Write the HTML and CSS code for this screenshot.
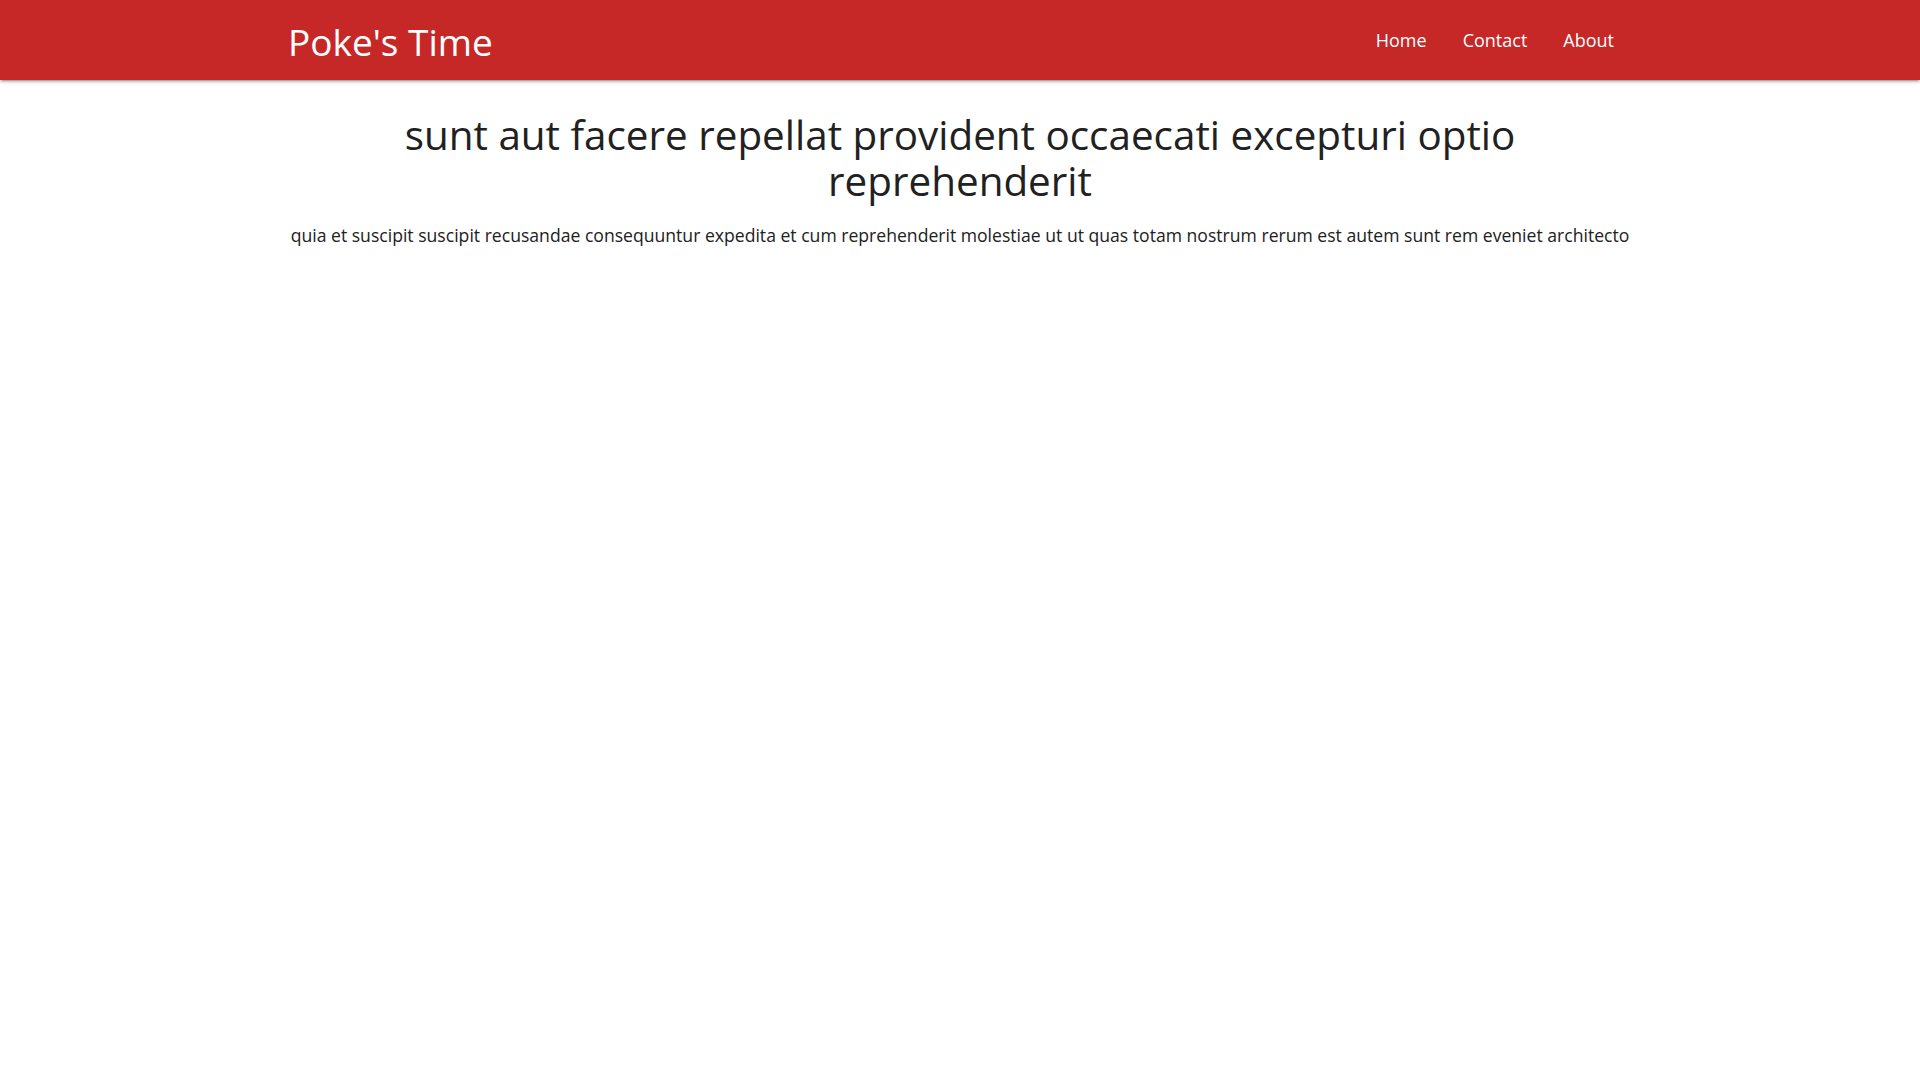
FILE: index.html
```html
<!DOCTYPE html>
<html lang="en">
<head>
<meta charset="utf-8">
<title>Poke's Time</title>
<link rel="stylesheet" href="styles.css">
</head>
<body>
<nav class="navbar">
  <div class="container nav-inner">
    <a class="brand" href="#">Poke's Time</a>
    <ul class="nav-links">
      <li><a href="#">Home</a></li>
      <li><a href="#">Contact</a></li>
      <li><a href="#">About</a></li>
    </ul>
  </div>
</nav>
<main class="container content">
  <h1 class="post-title">sunt aut facere repellat provident occaecati excepturi optio reprehenderit</h1>
  <p class="post-body">quia et suscipit suscipit recusandae consequuntur expedita et cum reprehenderit molestiae ut ut quas totam nostrum rerum est autem sunt rem eveniet architecto</p>
</main>
</body>
</html>
```

FILE: styles.css
```css
html, body {
  margin: 0;
  padding: 0;
}
body {
  font-family: "Open Sans", "Noto Sans", sans-serif;
  color: #212121;
  background: #fff;
}
.container {
  width: 1344px;
  margin: 0 auto;
}
.navbar {
  background: #c62828;
  height: 80px;
  box-shadow: 0 2px 2px 0 rgba(0,0,0,0.14), 0 3px 1px -2px rgba(0,0,0,0.12), 0 1px 5px 0 rgba(0,0,0,0.2);
}
.nav-inner {
  display: flex;
  align-items: center;
  justify-content: space-between;
  height: 80px;
}
.brand {
  color: #fff;
  text-decoration: none;
  font-size: 37px;
  margin-top: 2px;
}
.nav-links {
  display: flex;
  list-style: none;
  margin: 0;
  padding: 0;
}
.nav-links a {
  display: block;
  color: #fff;
  text-decoration: none;
  font-size: 18px;
  padding: 0 18px;
  line-height: 80px;
}
.content {
  text-align: center;
}
.post-title {
  font-weight: 400;
  font-size: 40.4px;
  line-height: 46px;
  margin: 0;
  padding-top: 32px;
}
.post-body {
  font-size: 17.6px;
  margin: 0;
  padding-top: 19px;
}
```
